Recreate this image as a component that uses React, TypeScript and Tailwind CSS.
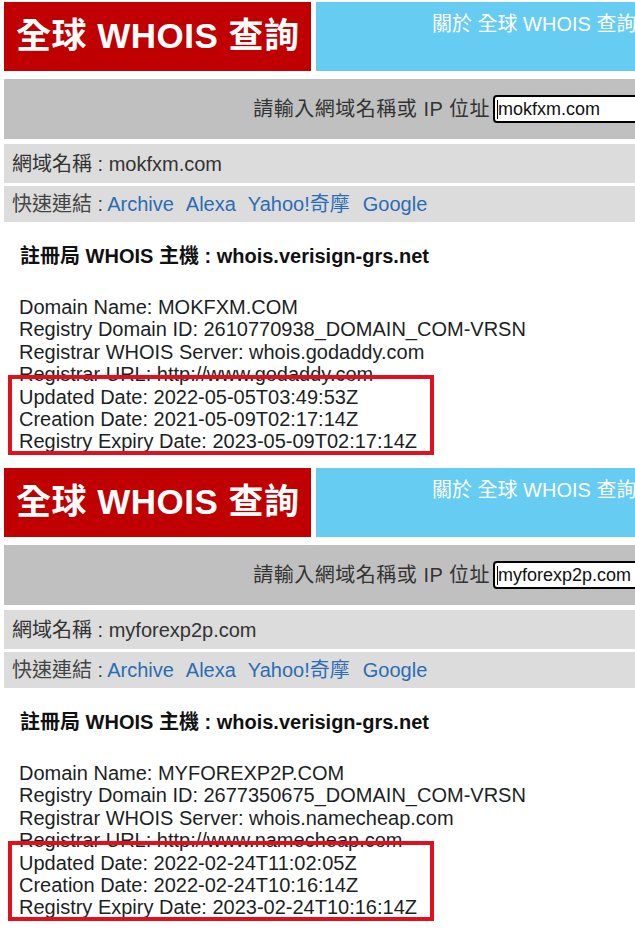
const font = '[font-family:"Liberation_Sans","Noto_Sans_CJK_TC",sans-serif]';

type Lookup = {
  domain: string;
  lines: string[];
};

const lookups: Lookup[] = [
  {
    domain: 'mokfxm.com',
    lines: [
      'Domain Name: MOKFXM.COM',
      'Registry Domain ID: 2610770938_DOMAIN_COM-VRSN',
      'Registrar WHOIS Server: whois.godaddy.com',
      'Registrar URL: http://www.godaddy.com',
      'Updated Date: 2022-05-05T03:49:53Z',
      'Creation Date: 2021-05-09T02:17:14Z',
      'Registry Expiry Date: 2023-05-09T02:17:14Z',
    ],
  },
  {
    domain: 'myforexp2p.com',
    lines: [
      'Domain Name: MYFOREXP2P.COM',
      'Registry Domain ID: 2677350675_DOMAIN_COM-VRSN',
      'Registrar WHOIS Server: whois.namecheap.com',
      'Registrar URL: http://www.namecheap.com',
      'Updated Date: 2022-02-24T11:02:05Z',
      'Creation Date: 2022-02-24T10:16:14Z',
      'Registry Expiry Date: 2023-02-24T10:16:14Z',
    ],
  },
];

function Panel({ domain, lines }: Lookup) {
  return (
    <div className="h-[466px] overflow-hidden">
      {/* header */}
      <div className="flex h-[69px] pl-1 gap-[5px]">
        <div className="w-[307px] shrink-0 bg-[#c00000] flex items-center pl-3">
          <span className="text-white font-bold text-[35px] tracking-[0.5px] whitespace-nowrap">全球 WHOIS 查詢</span>
        </div>
        <div className="flex-1 bg-[#66ccf2] pl-[116px] pt-[7px] overflow-hidden">
          <span className="text-white text-[20px] whitespace-nowrap">關於 全球 WHOIS 查詢</span>
        </div>
      </div>

      {/* search */}
      <div className="mt-2 ml-1 h-[60px] bg-[#c0c0c0] flex items-center justify-end overflow-hidden">
        <span className="text-[#333] text-[20px] tracking-[0.5px] whitespace-nowrap mr-[3px]">請輸入網域名稱或 IP 位址</span>
        <div className="w-[146px] h-[28px] -mr-[4px] border-2 border-black rounded-[4px] bg-white flex items-center pl-[2px] shrink-0">
          <span className="w-px h-[19px] bg-black" />
          <span className="text-[18px] text-[#111]">{domain}</span>
        </div>
      </div>

      {/* domain row */}
      <div className="mt-[5px] ml-1 h-[39px] bg-[#dcdcdc] flex items-center pl-2">
        <span className="text-[20px] text-[#333]">網域名稱 : {domain}</span>
      </div>

      {/* quick links */}
      <div className="mt-[3px] ml-1 h-[36px] bg-[#dcdcdc] flex items-center pl-2 text-[20px]">
        <span className="text-[#444]">快速連結 : </span>
        <span className="text-[#2b6cb5] ml-1">Archive</span>
        <span className="text-[#2b6cb5] ml-[12px]">Alexa</span>
        <span className="text-[#2b6cb5] ml-[12px]">Yahoo!奇摩</span>
        <span className="text-[#2b6cb5] ml-[13px]">Google</span>
      </div>

      {/* registry */}
      <div className="mt-[22px] pl-5 text-[20px] font-bold text-[#111] leading-[24px] whitespace-nowrap">
        註冊局 WHOIS 主機 : whois.verisign-grs.net
      </div>

      <div className="relative mt-[28px] pl-[19px] text-[20px] leading-[22.4px] text-[#1c1f24]">
        {lines.map((l) => (
          <div key={l} className="whitespace-nowrap">{l}</div>
        ))}
        <div className="absolute left-2 top-[79px] w-[426px] h-[80px] border-4 border-[#e0101c]" />
      </div>
    </div>
  );
}

export default function App() {
  return (
    <div className={`w-[635px] h-[938px] bg-white pt-[2px] overflow-hidden ${font}`}>
      {lookups.map((l) => (
        <Panel key={l.domain} {...l} />
      ))}
    </div>
  );
}
